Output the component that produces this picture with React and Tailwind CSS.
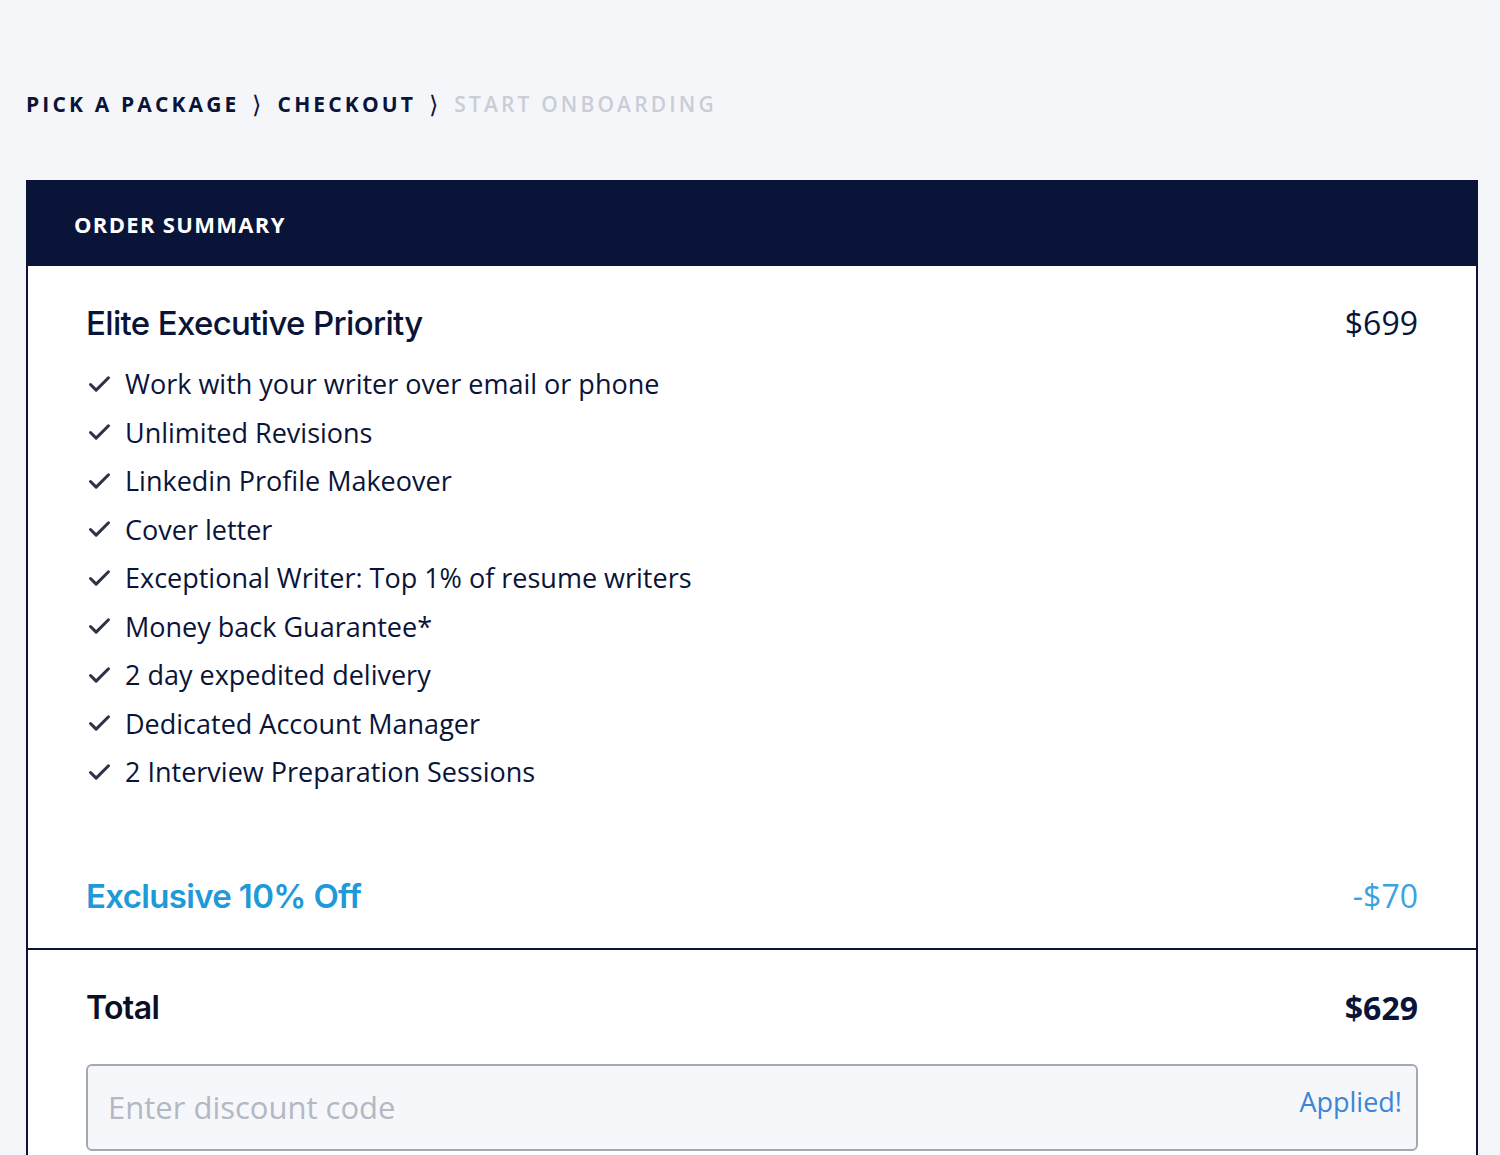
import { Check } from 'lucide-react';

const features = [
    'Work with your writer over email or phone',
    'Unlimited Revisions',
    'Linkedin Profile Makeover',
    'Cover letter',
    'Exceptional Writer: Top 1% of resume writers',
    'Money back Guarantee*',
    '2 day expedited delivery',
    'Dedicated Account Manager',
    '2 Interview Preparation Sessions',
];

const body = { fontFamily: '"Open Sans", "Noto Sans", sans-serif' };
const heading = { fontFamily: 'Inter, "Liberation Sans", sans-serif' };

const Steps = () => (
    <nav
        className="flex items-center gap-[13px] text-[21px] leading-[28px] font-bold tracking-[0.15em] uppercase"
        style={body}
    >
        <span className="text-[#0a1439]">Pick a package</span>
        <span className="text-[#0a1439] font-normal text-[24px]">⟩</span>
        <span className="text-[#0a1439]">Checkout</span>
        <span className="text-[#0a1439] font-normal text-[24px]">⟩</span>
        <span className="text-[#c9cdd6] font-semibold">Start onboarding</span>
    </nav>
);

export default function App() {
    return (
        <div className="min-h-[1155px] bg-[#f5f6fa] pl-[26px] pr-[22px] pt-[90px]">
            <Steps />

            <div className="mt-[62px] border-2 border-[#0a1439] bg-white">
                <div className="bg-[#0a1439] h-[84px] flex items-center px-[46px]">
                    <h2
                        className="text-white text-[22px] font-bold tracking-[0.06em]"
                        style={body}
                    >
                        ORDER SUMMARY
                    </h2>
                </div>

                <div className="px-[58px] pt-[37px] pb-[32px]">
                    <div className="flex items-center justify-between h-[40px]">
                        <h3
                            className="text-[33px] leading-[40px] font-medium text-[#0a1439] tracking-[-0.02em]"
                            style={heading}
                        >
                            Elite Executive Priority
                        </h3>
                        <span className="text-[32px] leading-[40px] text-[#0a1439]" style={body}>
                            $699
                        </span>
                    </div>

                    <ul className="mt-[17px] flex flex-col">
                        {features.map((f) => (
                            <li
                                key={f}
                                className="flex items-center gap-[12px] h-[48.5px] text-[27px] text-[#0a1439]"
                                style={body}
                            >
                                <Check className="w-[27px] h-[27px] text-[#2c3347]" strokeWidth={2.7} />
                                <span>{f}</span>
                            </li>
                        ))}
                    </ul>

                    <div className="mt-[79px] flex items-center justify-between h-[40px]">
                        <span
                            className="text-[33px] leading-[40px] font-semibold text-[#1e9ad8] tracking-[-0.02em]"
                            style={heading}
                        >
                            Exclusive 10% Off
                        </span>
                        <span className="text-[32px] leading-[40px] text-[#3ba3df]" style={body}>
                            -$70
                        </span>
                    </div>
                </div>

                <div className="border-t-2 border-[#0a1439] px-[58px] pt-[38px] pb-[30px]">
                    <div className="flex items-center justify-between h-[40px]">
                        <span
                            className="text-[32px] leading-[40px] font-semibold text-[#0a0f24] tracking-[-0.02em]"
                            style={heading}
                        >
                            Total
                        </span>
                        <span className="text-[32px] leading-[40px] font-bold text-[#0a1439]" style={body}>
                            $629
                        </span>
                    </div>

                    <div className="mt-[36px] relative">
                        <input
                            className="w-full h-[87px] rounded-[6px] border-2 border-[#a4a8b3] bg-[#f6f7fb] px-[20px] text-[31px] text-[#0a1439] placeholder:text-[#b3b8c2] outline-none"
                            style={body}
                            placeholder="Enter discount code"
                        />
                        <span
                            className="absolute right-[16px] top-[18px] text-[27px] text-[#3b86d6]"
                            style={body}
                        >
                            Applied!
                        </span>
                    </div>
                </div>
            </div>
        </div>
    );
}
